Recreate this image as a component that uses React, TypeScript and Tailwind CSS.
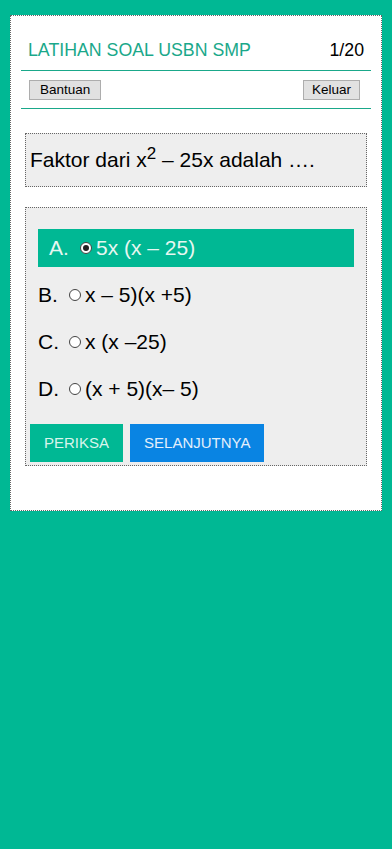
import React, { FC } from "react";

type Option = { label: string; text: React.ReactNode };

const options: Option[] = [
  { label: "A.", text: "5x (x – 25)" },
  { label: "B.", text: "x – 5)(x +5)" },
  { label: "C.", text: "x (x –25)" },
  { label: "D.", text: "(x + 5)(x– 5)" },
];

const Radio: FC<{ checked?: boolean }> = ({ checked }) => (
  <span className="mx-[3px] flex h-[12px] w-[12px] shrink-0 items-center justify-center rounded-full border border-[#444] bg-white">
    {checked && <span className="h-[6px] w-[6px] rounded-full bg-[#222]" />}
  </span>
);

const App: FC = () => {
  const selected = 0;

  return (
    <div
      className="min-h-[849px] bg-[#00b894] px-[10px] pt-[15px]"
      style={{ fontFamily: '"Liberation Sans", Arial, sans-serif' }}
    >
      <div className="h-[496px] w-[372px] border border-dotted border-[#666] bg-white px-[10px]">
        {/* header */}
        <div className="flex items-center justify-between border-b border-[#1aa88a] px-[7px] pt-[24px] pb-[9px] text-[17.75px] leading-[21px]">
          <span className="text-[#1aa88a]">LATIHAN SOAL USBN SMP</span>
          <span className="text-black">1/20</span>
        </div>

        <div className="flex items-center justify-between border-b border-[#1aa88a] pt-[9px] pr-[11px] pb-[8px] pl-[8px]">
          <button className="h-[20px] border border-[#adadad] bg-[#e1e1e1] px-[10px] text-[13.5px] leading-[18px] text-black">
            Bantuan
          </button>
          <button className="h-[20px] border border-[#adadad] bg-[#e1e1e1] px-[8px] text-[13.5px] leading-[18px] text-black">
            Keluar
          </button>
        </div>

        {/* question */}
        <div className="mx-[4px] mt-[24px] flex h-[54px] items-center border border-dotted border-[#666] bg-[#eeeeee] px-[4px] text-[21px] text-black">
          <span>
            Faktor dari x<sup className="text-[17px]">2</sup> – 25x adalah ….
          </span>
        </div>

        {/* options */}
        <div className="mx-[4px] mt-[20px] h-[259px] border border-dotted border-[#666] bg-[#eeeeee] pt-[21px]">
          <div className="flex flex-col gap-[9px] px-[12px]">
            {options.map((o, i) => (
              <div
                key={o.label}
                className={
                  i === selected
                    ? "flex h-[38px] items-center bg-[#00b894] px-[11px] text-[21px] text-[#e6f7f1]"
                    : "flex h-[38px] items-center text-[21px] text-black"
                }
              >
                <span className="w-[28px]">{o.label}</span>
                <Radio checked={i === selected} />
                <span className="ml-[1px]">{o.text}</span>
              </div>
            ))}
          </div>

          <div className="mt-[16px] flex gap-[7px] px-[4px]">
            <button className="h-[38px] bg-[#00b894] px-[14px] text-[15px] text-[#d9f5ec]">
              PERIKSA
            </button>
            <button className="h-[38px] bg-[#0984e3] px-[14px] text-[15px] text-[#e3effb]">
              SELANJUTNYA
            </button>
          </div>
        </div>
      </div>
    </div>
  );
};

export default App;
